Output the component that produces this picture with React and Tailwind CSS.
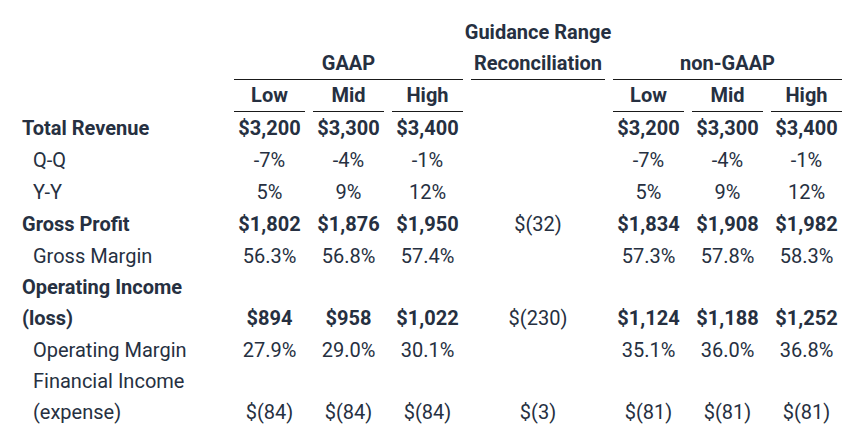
const rows = [
  { label: 'Total Revenue', bold: true, gaap: ['$3,200', '$3,300', '$3,400'], rec: '', non: ['$3,200', '$3,300', '$3,400'] },
  { label: 'Q-Q', sub: true, gaap: ['-7%', '-4%', '-1%'], rec: '', non: ['-7%', '-4%', '-1%'] },
  { label: 'Y-Y', sub: true, gaap: ['5%', '9%', '12%'], rec: '', non: ['5%', '9%', '12%'] },
  { label: 'Gross Profit', bold: true, gaap: ['$1,802', '$1,876', '$1,950'], rec: '$(32)', non: ['$1,834', '$1,908', '$1,982'] },
  { label: 'Gross Margin', sub: true, gaap: ['56.3%', '56.8%', '57.4%'], rec: '', non: ['57.3%', '57.8%', '58.3%'] },
  { label: 'Operating Income (loss)', bold: true, wrap: true, gaap: ['$894', '$958', '$1,022'], rec: '$(230)', non: ['$1,124', '$1,188', '$1,252'] },
  { label: 'Operating Margin', sub: true, gaap: ['27.9%', '29.0%', '30.1%'], rec: '', non: ['35.1%', '36.0%', '36.8%'] },
  { label: 'Financial Income (expense)', sub: true, wrap: true, gaap: ['$(84)', '$(84)', '$(84)'], rec: '$(3)', non: ['$(81)', '$(81)', '$(81)'] },
];

export default function App() {
  return (
    <div className="w-[864px] h-[438px] bg-white pl-[14px] pt-[16px] text-[#263041] text-[20px] font-['Roboto',sans-serif]">
      <table className="table-fixed w-[834px] border-separate border-spacing-x-2 border-spacing-y-0">
        <colgroup>
          <col className="w-[204px]" />
          <col className="w-[71px]" />
          <col className="w-[71px]" />
          <col className="w-[71px]" />
          <col className="w-[134px]" />
          <col className="w-[71px]" />
          <col className="w-[71px]" />
          <col className="w-[71px]" />
        </colgroup>
        <thead className="font-bold">
          <tr>
            <th colSpan={4} className="p-0 leading-[32px]"></th>
            <th className="p-0 leading-[32px]">
              <div className="flex justify-center whitespace-nowrap -mx-4">Guidance Range</div>
            </th>
            <th colSpan={3} className="p-0 leading-[32px]"></th>
          </tr>
          <tr>
            <th className="p-0 leading-[31px]"></th>
            <th colSpan={3} className="p-0 leading-[31px] text-center border-b border-[#1a1a1a]">GAAP</th>
            <th className="p-0 leading-[31px] text-center border-b border-[#1a1a1a] whitespace-nowrap">Reconciliation</th>
            <th colSpan={3} className="p-0 leading-[31px] text-center border-b border-[#1a1a1a]">non-GAAP</th>
          </tr>
          <tr>
            <th className="p-0 leading-[31px]"></th>
            {['Low', 'Mid', 'High'].map((h) => (
              <th key={'g' + h} className="p-0 leading-[31px] text-center border-b border-[#1a1a1a]">{h}</th>
            ))}
            <th className="p-0 leading-[31px]"></th>
            {['Low', 'Mid', 'High'].map((h) => (
              <th key={'n' + h} className="p-0 leading-[31px] text-center border-b border-[#1a1a1a]">{h}</th>
            ))}
          </tr>
        </thead>
        <tbody>
          {rows.map((r) => {
            const lh = r.wrap ? 'leading-[31px]' : 'leading-[32px]';
            const wt = r.bold ? 'font-bold' : '';
            return (
              <tr key={r.label}>
                <td className={`p-0 align-bottom ${lh} ${wt} ${r.sub ? 'pl-[11px]' : ''}`}>{r.label}</td>
                {r.gaap.map((v, i) => (
                  <td key={'g' + i} className={`p-0 h-[32px] align-bottom text-center whitespace-nowrap ${lh} ${wt}`}>{v}</td>
                ))}
                <td className={`p-0 align-bottom text-center ${lh}`}>{r.rec}</td>
                {r.non.map((v, i) => (
                  <td key={'n' + i} className={`p-0 align-bottom text-center whitespace-nowrap ${lh} ${wt}`}>{v}</td>
                ))}
              </tr>
            );
          })}
        </tbody>
      </table>
    </div>
  );
}
